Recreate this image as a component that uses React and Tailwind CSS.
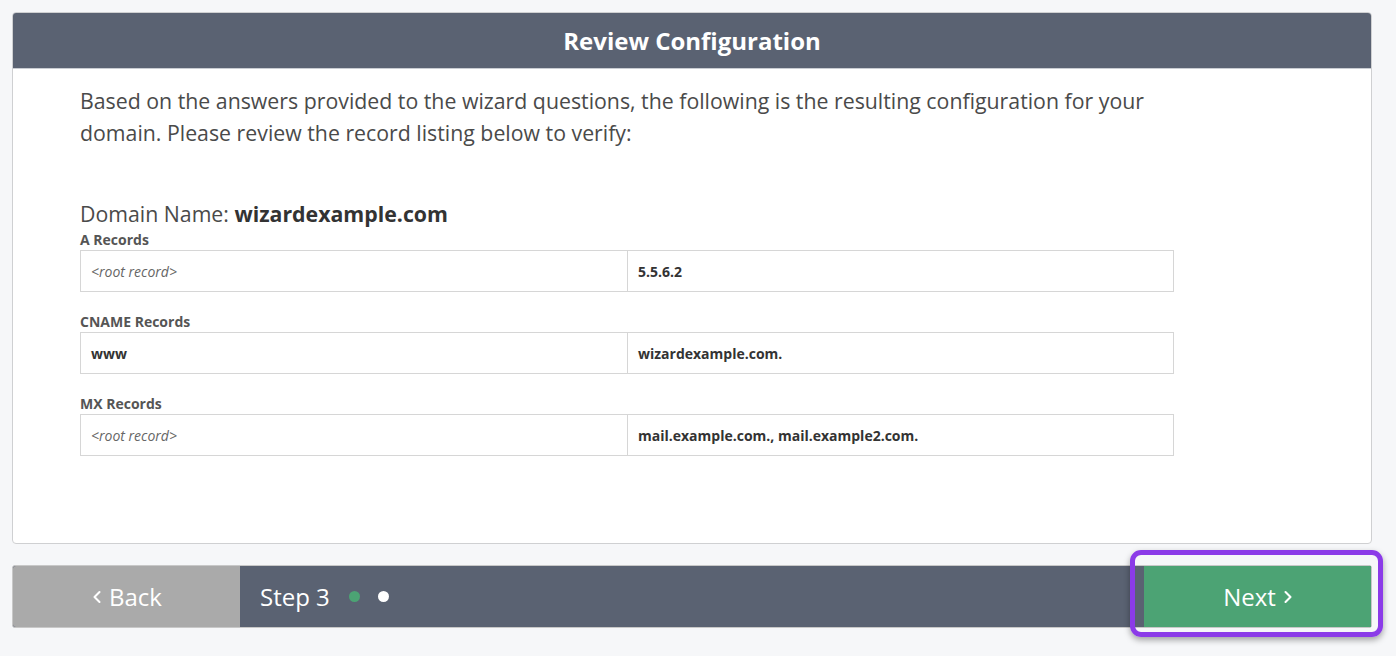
import { ChevronLeft, ChevronRight } from 'lucide-react';

const sections = [
  { title: 'A Records', name: '<root record>', root: true, value: '5.5.6.2' },
  { title: 'CNAME Records', name: 'www', root: false, value: 'wizardexample.com.' },
  { title: 'MX Records', name: '<root record>', root: true, value: 'mail.example.com., mail.example2.com.' },
];

export default function App() {
  return (
    <div className="min-h-screen w-full bg-[#f6f7f9] pl-3 pr-6 pt-3 font-['Open_Sans',sans-serif] text-[#444]">
      {/* Card */}
      <div className="border border-[#cfd0d2] rounded-[4px] bg-white overflow-hidden">
        <div className="h-[56px] bg-[#5a6272] flex items-center justify-center border-b border-[#c9ccd2]">
          <h1 className="text-[24px] font-bold text-white leading-none">Review Configuration</h1>
        </div>
        <div className="pl-[67px] pt-[16px] pb-[87px]">
          <div className="w-[1094px]">
            <p className="text-[21.3px] leading-[32px] text-[#4a4a4a]">
              Based on the answers provided to the wizard questions, the following is the resulting configuration for your domain. Please review the record listing below to verify:
            </p>
            <div className="mt-[51px] text-[21.3px] leading-[28px] text-[#4a4a4a]">
              Domain Name: <span className="font-bold text-[#333]">wizardexample.com</span>
            </div>
            {sections.map((s, i) => (
              <div key={s.title} className={i === 0 ? 'mt-[3px]' : 'mt-[21px]'}>
                <div className="text-[14px] leading-[18px] font-bold text-[#555]">{s.title}</div>
                <div className="mt-[1px] h-[42px] grid grid-cols-2 border border-[#d6d6d6]">
                  <div className={`flex items-center px-[10px] text-[14px] ${s.root ? 'italic text-[#666]' : 'font-bold text-[#333]'}`}>
                    {s.name}
                  </div>
                  <div className="flex items-center px-[10px] border-l border-[#d6d6d6] text-[14px] font-bold text-[#333]">
                    {s.value}
                  </div>
                </div>
              </div>
            ))}
          </div>
        </div>
      </div>

      {/* Footer bar */}
      <div className="mt-[21px] h-[63px] flex rounded-[3px] bg-[#5a6272] border border-[#c8c8c8]">
        <button className="w-[227px] h-full bg-[#aaaaaa] flex items-center justify-center text-white text-[24px] rounded-l-[3px] pr-[4px]">
          <ChevronLeft className="w-[20px] h-[20px] mr-[2px]" strokeWidth={2.5} />
          Back
        </button>
        <div className="flex-1 flex items-center pl-[20px] text-white text-[24px]">
          Step 3
          <span className="ml-[19px] w-[11px] h-[11px] rounded-full bg-[#4ca374]" />
          <span className="ml-[18px] w-[11px] h-[11px] rounded-full bg-white" />
        </div>
        <div className="relative w-[227px] h-full">
          <button className="w-full h-full bg-[#4ca374] flex items-center justify-center text-white text-[24px] pl-[6px]">
            Next
            <ChevronRight className="w-[20px] h-[20px] ml-[2px]" strokeWidth={2.5} />
          </button>
          <div className="absolute left-[-14px] top-[-16px] right-[-12px] bottom-[-10px] border-[5px] border-[#8b3be8] rounded-[11px] shadow-[0_3px_6px_rgba(0,0,0,0.35)] pointer-events-none" />
        </div>
      </div>
    </div>
  );
}
